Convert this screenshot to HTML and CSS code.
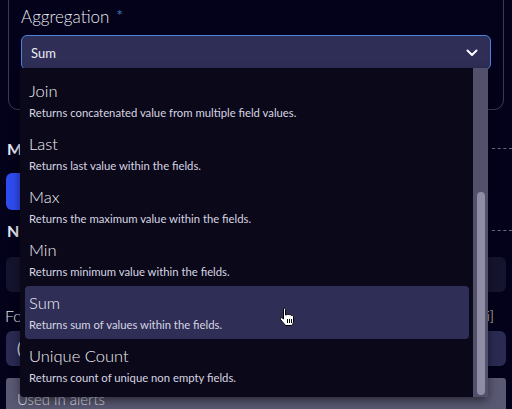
FILE: index.html
```html
<!DOCTYPE html>
<html>
<head>
<meta charset="utf-8">
<link rel="stylesheet" href="styles.css">
</head>
<body>
<div class="page">
  <div class="card">
    <div class="label">Aggregation <span class="star">*</span></div>
    <div class="select">
      <span>Sum</span>
      <svg class="chev" width="12" height="8" viewBox="0 0 12 8"><path d="M1.5 1.5 L6 6 L10.5 1.5" fill="none" stroke="#fff" stroke-width="2" stroke-linecap="round" stroke-linejoin="round"/></svg>
    </div>
  </div>
  <div class="section-head"><span class="h">M</span><span class="dash"></span></div>
  <div class="btn-row"><div class="blue-btn"></div></div>
  <div class="section-head second"><span class="h">N</span><span class="dash"></span></div>
  <div class="dark-input"></div>
  <div class="field-label"><span>Fo</span><span class="fi">i]</span></div>
  <div class="input2"><span>(</span></div>
  <div class="gray-box">Used in alerts</div>

  <div class="dropdown">
    <div class="list">
      <div class="item"><div class="t">Join</div><div class="d">Returns concatenated value from multiple field values.</div></div>
      <div class="item"><div class="t">Last</div><div class="d">Returns last value within the fields.</div></div>
      <div class="item"><div class="t">Max</div><div class="d">Returns the maximum value within the fields.</div></div>
      <div class="item"><div class="t">Min</div><div class="d">Returns minimum value within the fields.</div></div>
      <div class="item active"><div class="t">Sum</div><div class="d">Returns sum of values within the fields.</div></div>
      <div class="item"><div class="t">Unique Count</div><div class="d">Returns count of unique non empty fields.</div></div>
    </div>
    <div class="scrollbar"><div class="thumb"></div></div>
  </div>

  <svg class="cursor" width="16" height="20" viewBox="0 0 16 20">
    <path d="M4.5 1.5 C5.5 0.8 6.5 1.3 6.5 2.5 L6.5 8 L7.5 8 C8 7 9.5 7 10 8 C10.5 7.3 12 7.4 12.3 8.5 C13 8 14.5 8.3 14.5 9.8 L14.5 14 C14.5 16 13.5 17.5 12.5 18.5 L6.5 18.5 C5.5 17 3 14.5 1.5 12.5 C0.8 11.5 2 10 3.3 11 L4.5 12 Z" fill="#fff" stroke="#000" stroke-width="1"/>
    <path d="M8.5 12 V16 M10.5 12 V16 M12.5 12 V16" stroke="#000" stroke-width="1"/>
  </svg>
</div>
</body>
</html>
```
FILE: styles.css
```css
* { box-sizing: border-box; }
html, body { margin: 0; padding: 0; }
body {
  width: 512px;
  height: 409px;
  overflow: hidden;
  background: #03021a;
  font-family: Lato, "Open Sans", sans-serif;
  color: #e6e6ef;
}
.page {
  position: relative;
  display: flow-root;
  width: 512px;
  height: 409px;
  padding: 0 6px 0 6px;
}
.card {
  margin: -20px 2px 0 2px;
  height: 130px;
  border: 1px solid #3b3a55;
  border-radius: 10px;
  padding: 25px 12px 0 12px;
}
.label {
  font-size: 17px;
  line-height: 22px;
  font-weight: 300;
  color: #e8e8f0;
}
.star { color: #4f8fd6; margin-left: 2px; }
.select {
  margin-top: 7px;
  height: 35px;
  background: #2f2e57;
  border: 1px solid #4a82dc;
  border-radius: 6px;
  display: flex;
  align-items: center;
  justify-content: space-between;
  padding: 0 12px 0 9px;
  font-size: 13px;
  color: #ececf4;
}
.section-head {
  margin-top: 29px;
  display: flex;
  align-items: center;
  height: 18px;
}
.section-head.second { margin-top: 11px; }
.h { font-weight: 700; font-size: 16px; padding-left: 1px; width: 30px; }
.dash {
  margin-left: auto;
  width: 20px;
  margin-right: -6px;
  border-top: 1px dashed #6a6a88;
}
.btn-row { margin-top: 16px; height: 37px; }
.blue-btn {
  width: 60px;
  height: 37px;
  background: #2e4bf0;
  border-radius: 6px;
}
.dark-input {
  margin-top: 18px;
  height: 35px;
  background: #15142f;
  border-radius: 6px;
}
.field-label {
  margin-top: 15px;
  height: 18px;
  display: flex;
  justify-content: space-between;
  font-size: 16px;
  line-height: 18px;
  font-weight: 300;
  margin-left: -1px;
}
.fi { margin-right: 12px; font-size: 14px; }
.input2 {
  margin-top: 6px;
  height: 35px;
  background: #2b2a52;
  border-radius: 6px;
  padding-left: 11px;
  font-size: 15px;
  line-height: 35px;
}
.gray-box {
  margin-top: 12px;
  height: 40px;
  background: #5a5974;
  border-radius: 3px;
  padding: 12px 0 0 11px;
  font-size: 15px;
  font-weight: 300;
  color: #e8e8f0;
}
.dropdown {
  position: absolute;
  left: 20px;
  top: 68px;
  width: 468px;
  height: 329px;
  background: #0b0819;
  border-radius: 0 0 4px 4px;
  box-shadow: 0 4px 10px rgba(0,0,0,0.5);
  display: flex;
}
.list {
  flex: 1;
  padding: 6px 4px 0 5px;
}
.item {
  height: 53px;
  padding: 7px 0 0 4px;
  border-radius: 4px;
}
.item.active { background: #2f2e57; }
.t { font-size: 16.5px; line-height: 20px; font-weight: 300; color: #f0f0f6; }
.d { margin-top: 5px; font-size: 11.3px; line-height: 14px; color: #d6d6e2; }
.scrollbar {
  width: 15px;
  background: #52506b;
  position: relative;
}
.thumb {
  position: absolute;
  left: 4px;
  top: 124px;
  width: 8px;
  bottom: 2px;
  background: #8f8da6;
  border-radius: 4px;
}
.cursor { position: absolute; left: 279px; top: 307px; }
```
